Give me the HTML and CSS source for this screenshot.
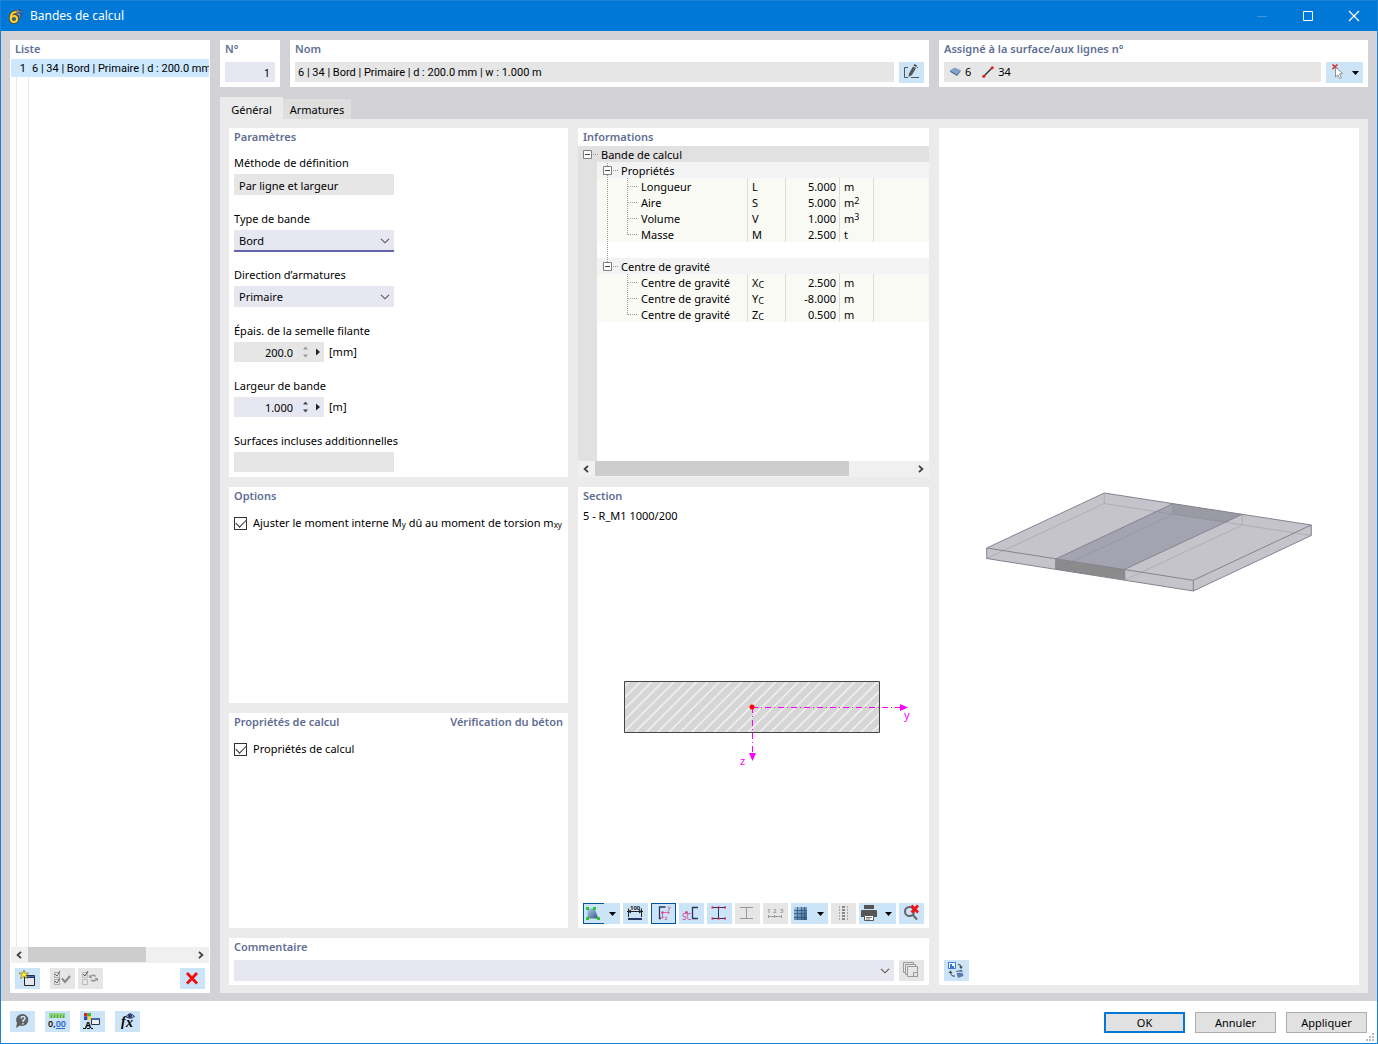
FILE: index.html
```html
<!DOCTYPE html>
<html lang="fr">
<head>
<meta charset="utf-8">
<title>Bandes de calcul</title>
<link rel="stylesheet" href="styles.css">
</head>
<body>
<svg class="defs" aria-hidden="true">
  <defs>
    <linearGradient id="blue" x1="0" y1="0" x2="1" y2="1"><stop offset="0" stop-color="#a9cdf0"/><stop offset="1" stop-color="#35567f"/></linearGradient>
    <pattern id="hatch" width="11.3" height="11.3" patternUnits="userSpaceOnUse"><path d="M-1 12.3L12.3 -1M-1 1L1 -1M10.3 12.3L12.3 10.3" stroke="#fff" stroke-width="1"/></pattern>
    <symbol id="chevron" viewBox="0 0 10 6"><path d="M1 .8L5 4.8L9 .8" fill="none" stroke="#555" stroke-width="1.1"/></symbol>
    <symbol id="left" viewBox="0 0 6 8"><path d="M5 .8L1.6 4L5 7.2" fill="none" stroke="#404040" stroke-width="1.8"/></symbol>
    <symbol id="right" viewBox="0 0 6 8"><path d="M1 .8L4.4 4L1 7.2" fill="none" stroke="#404040" stroke-width="1.8"/></symbol>
    <symbol id="down" viewBox="0 0 7 4"><path d="M0 0H7L3.5 4Z"/></symbol>
  </defs>
</svg>

<header class="titlebar">
  <svg width="16" height="16" viewBox="0 0 16 16" aria-hidden="true"><path d="M5 4Q8 -1 15 3L13 7L15 5L12 12L9 8Z" fill="#34557f"/><path d="M7 3L14 4M6 5L13 7M9 1L12 10" stroke="#8aa5c5" stroke-width=".7"/><path d="M8.500 4Q3 4 2.700 10Q2.700 14 6 14Q9 14 9 11Q9 8 6 8Q4 8 3 10" fill="none" stroke="#5d4b12" stroke-width="3.600"/><path d="M8.500 4Q3 4 2.700 10Q2.700 14 6 14Q9 14 9 11Q9 8 6 8Q4 8 3 10" fill="none" stroke="#ffd33c" stroke-width="2"/></svg>
  <h1>Bandes de calcul</h1>
  <div class="caption">
    <button type="button" aria-label="Réduire" disabled><svg width="12" height="12" viewBox="0 0 12 12"><path d="M1 6.500H11" stroke="#3c96e0"/></svg></button>
    <button type="button" aria-label="Agrandir"><svg width="12" height="12" viewBox="0 0 12 12"><path d="M1.500 1.500H10.500V10.500H1.500Z" fill="none" stroke="#fff"/></svg></button>
    <button type="button" aria-label="Fermer"><svg width="12" height="12" viewBox="0 0 12 12"><path d="M1 1L11 11M11 1L1 11" stroke="#fff" stroke-width="1.200"/></svg></button>
  </div>
</header>

<main class="workspace">
  <section class="panel list">
    <h2>Liste</h2>
    <ul class="entries">
      <li><span class="index">1</span><span class="entry">6 | 34 | Bord | Primaire | d : 200.0 mm | w : 1.000 m</span></li>
    </ul>
    <div class="scroll"><svg width="6" height="8"><use href="#left"/></svg><div class="track"><div class="thumb thumb-list"></div></div><svg width="6" height="8"><use href="#right"/></svg></div>
    <div class="list-tools">
      <button type="button" class="tool" aria-label="Nouveau"><svg width="25" height="21" viewBox="0 0 25 21"><path d="M9.500 8.500H19.500V17.500H9.500Z" fill="#e5e8f0" stroke="#252525"/><path d="M9.500 7.500H19.500V9.500H9.500Z" fill="#4971b5" stroke="#232f55"/><path d="M9 2L10 5.200L13.500 5L11 7L12.500 10.500L9 8.500L5.500 10.500L6.700 7L4 5L8 5Z" fill="#ffee34" stroke="#777528" stroke-width=".7"/></svg></button>
      <button type="button" class="tool off" aria-label="Tout sélectionner" disabled><svg width="25" height="21" viewBox="0 0 25 21" fill="none"><path d="M4.500 4.500H9.500V9.500H4.500ZM4.500 11.500H9.500V16.500H4.500Z" stroke="#aaa"/><path d="M5 6L7 8L10 3M5 13L7 15L10 10" stroke="#666"/><path d="M12 10.500L15 14L20 8" stroke="#888" stroke-width="2"/></svg></button>
      <button type="button" class="tool off" aria-label="Inverser la sélection" disabled><svg width="25" height="21" viewBox="0 0 25 21" fill="none"><path d="M4.500 4.500H9.500V9.500H4.500ZM4.500 11.500H9.500V16.500H4.500Z" stroke="#bbb"/><path d="M5 6L7 8L10 3" stroke="#555"/><path d="M12.500 8.500Q15 6 18 8.500M18.500 11.500Q16 14 13 12" stroke="#999" stroke-width="1.600"/><path d="M11 6.500V10H14.500ZM20 13.500V10H16.500Z" fill="#999"/></svg></button>
      <button type="button" class="tool last" aria-label="Supprimer"><svg width="25" height="21" viewBox="0 0 25 21"><path d="M7 5L17 15.500M17 5L7 15.500" stroke="#f20d0d" stroke-width="2.800"/></svg></button>
    </div>
  </section>

  <div class="detail">
    <div class="heading">
      <section class="panel">
        <h2><label for="number">N°</label></h2>
        <input id="number" class="field edit number" value="1">
      </section>
      <section class="panel">
        <h2><label for="name">Nom</label></h2>
        <div class="row">
          <input id="name" class="field compact" readonly value="6 | 34 | Bord | Primaire | d : 200.0 mm | w : 1.000 m">
          <button type="button" class="tool" aria-label="Modifier le nom"><svg width="25" height="21" viewBox="0 0 25 21"><path d="M9 5.500H5.500V15.500H9M12 15.500H20M18 5.500H19" fill="none" stroke="#555"/><path d="M9.500 15L10 11.500L14 4.500L17 6L13 13Z" fill="#555"/><path d="M14.500 3.500L15.500 2L18 3.500L17.300 5Z" fill="#444"/></svg></button>
        </div>
      </section>
      <section class="panel">
        <h2>Assigné à la surface/aux lignes n°</h2>
        <div class="row">
          <div class="field assigned">
            <svg width="12" height="12" viewBox="0 0 12 12" aria-hidden="true"><path d="M1 4.500L5.500 1.500L11.500 4L8 8.500Z" fill="#7fa4cc"/><path d="M1 4.500L8 8.500V10L1 5.700ZM8 8.500L11.500 4V5.500L8 10Z" fill="#46688f"/></svg><span class="surface">6</span>
            <svg width="12" height="12" viewBox="0 0 12 12" aria-hidden="true"><path d="M1.500 10.500L10.500 1.500" stroke="#222" stroke-width="1.200"/><circle cx="1.800" cy="10.200" r="1.500" fill="#e21818"/><circle cx="10.200" cy="1.800" r="1.500" fill="#e21818"/></svg><span>34</span>
          </div>
          <button type="button" class="tool wide" aria-label="Sélectionner"><svg width="25" height="21" viewBox="0 0 25 21"><path d="M6.500 2.500L11.500 7M11.500 2.500L6.500 7" stroke="#e81c1c" stroke-width="1.500"/><path d="M9.500 5L16.500 11.500L13.500 12L15.500 15.500L13.500 16.500L11.800 13L9.500 15Z" fill="#fff" stroke="#777" stroke-width=".8"/></svg><svg class="arrow" width="7" height="4"><use href="#down"/></svg></button>
        </div>
      </section>
    </div>

    <div class="tabs" role="tablist">
      <button type="button" role="tab" aria-selected="true" class="tab active">Général</button>
      <button type="button" role="tab" aria-selected="false" class="tab">Armatures</button>
    </div>

    <div class="content">
      <section class="panel params">
        <h2>Paramètres</h2>
        <div class="form">
          <div class="item"><label for="method">Méthode de définition</label><input id="method" class="field tall" readonly value="Par ligne et largeur"></div>
          <div class="item"><label for="type">Type de bande</label><div class="combo focused"><select id="type"><option>Bord</option></select><svg width="10" height="6"><use href="#chevron"/></svg></div></div>
          <div class="item"><label for="direction">Direction d’armatures</label><div class="combo"><select id="direction"><option>Primaire</option></select><svg width="10" height="6"><use href="#chevron"/></svg></div></div>
          <div class="item"><label for="thickness">Épais. de la semelle filante</label><div class="measure"><div class="spin"><input id="thickness" class="field" readonly value="200.0"><svg width="20" height="12" viewBox="0 0 20 12" aria-hidden="true"><path d="M0 3.500L2.500 .5L5 3.500ZM0 8.500L2.500 11.500L5 8.500Z" fill="#999"/><path d="M13 2.500L17 6L13 9.500Z" fill="#222"/></svg></div><span>[mm]</span></div></div>
          <div class="item"><label for="width">Largeur de bande</label><div class="measure"><div class="spin edit"><input id="width" class="field edit" value="1.000"><svg width="20" height="12" viewBox="0 0 20 12" aria-hidden="true"><path d="M0 3.500L2.500 .5L5 3.500ZM0 8.500L2.500 11.500L5 8.500Z" fill="#444"/><path d="M13 2.500L17 6L13 9.500Z" fill="#222"/></svg></div><span>[m]</span></div></div>
          <div class="item"><label for="extra">Surfaces incluses additionnelles</label><input id="extra" class="field" readonly value=""></div>
        </div>
      </section>

      <section class="panel info">
        <h2>Informations</h2>
        <div class="tree">
          <table>
            <colgroup><col class="c-gutter"><col class="c-name"><col class="c-symbol"><col class="c-value"><col class="c-unit"><col></colgroup>
            <tbody>
              <tr class="root"><th colspan="6">Bande de calcul</th></tr>
              <tr class="group"><td></td><th colspan="5">Propriétés</th></tr>
              <tr class="data"><td></td><th>Longueur</th><td>L</td><td>5.000</td><td>m</td><td></td></tr>
              <tr class="data"><td></td><th>Aire</th><td>S</td><td>5.000</td><td>m<sup>2</sup></td><td></td></tr>
              <tr class="data"><td></td><th>Volume</th><td>V</td><td>1.000</td><td>m<sup>3</sup></td><td></td></tr>
              <tr class="data"><td></td><th>Masse</th><td>M</td><td>2.500</td><td>t</td><td></td></tr>
              <tr><td colspan="6"></td></tr>
              <tr class="group"><td></td><th colspan="5">Centre de gravité</th></tr>
              <tr class="data"><td></td><th>Centre de gravité</th><td>X<sub>C</sub></td><td>2.500</td><td>m</td><td></td></tr>
              <tr class="data"><td></td><th>Centre de gravité</th><td>Y<sub>C</sub></td><td>-8.000</td><td>m</td><td></td></tr>
              <tr class="data"><td></td><th>Centre de gravité</th><td>Z<sub>C</sub></td><td>0.500</td><td>m</td><td></td></tr>
            </tbody>
          </table>
          <svg class="branches" width="64" height="176" viewBox="0 0 64 176" aria-hidden="true" fill="none">
            <path d="M15 8.500H20M35 24.500H40M35 120.500H40M29.500 17V120M49.500 32V89M49.500 128V169M50 40.500H60M50 56.500H60M50 72.500H60M50 88.500H60M50 136.500H60M50 152.500H60M50 168.500H60" stroke="#999" stroke-dasharray="1 1"/>
            <path d="M5.500 4.500H13.500V12.500H5.500ZM25.500 20.500H33.500V28.500H25.500ZM25.500 116.500H33.500V124.500H25.500Z" fill="#fff" stroke="#808080"/>
            <path d="M7 8.500H12M27 24.500H32M27 120.500H32" stroke="#444"/>
          </svg>
        </div>
        <div class="scroll"><svg width="6" height="8"><use href="#left"/></svg><div class="track"><div class="thumb thumb-info"></div></div><svg width="6" height="8"><use href="#right"/></svg></div>
      </section>

      <section class="panel options">
        <h2>Options</h2>
        <label class="check"><input type="checkbox" checked><span>Ajuster le moment interne M<sub>y</sub> dû au moment de torsion m<sub>xy</sub></span></label>
      </section>

      <section class="panel design">
        <div class="titles"><h2>Propriétés de calcul</h2><h2>Vérification du béton</h2></div>
        <label class="check"><input type="checkbox" checked><span>Propriétés de calcul</span></label>
      </section>

      <section class="panel section">
        <h2>Section</h2>
        <p>5 - R_M1 1000/200</p>
        <div class="canvas">
          <svg width="341" height="120" viewBox="583 654 341 120" role="img" aria-label="Section rectangulaire">
            <path d="M624.500 681.500H879.500V732.500H624.500Z" fill="#d6d6d6"/><path d="M624.500 681.500H879.500V732.500H624.500Z" fill="url(#hatch)" stroke="#444"/>
            <path d="M752 707.500H900M752.500 707V754" stroke="#f0f" stroke-dasharray="6 3 1 3"/>
            <path d="M900 704V711L908 707.500ZM749 753H756L752.500 761Z" fill="#f0f"/><circle cx="752" cy="707" r="2.500" fill="#f00"/>
            <text x="904" y="719" class="axis">y</text><text x="740" y="765" class="axis">z</text>
          </svg>
        </div>
        <div class="toolbar">
          <button type="button" class="tool wide split" aria-label="Affichage"><svg width="25" height="21" viewBox="0 0 25 21"><path d="M4.500 5.500H11.500L15.500 15.500H4.500Z" fill="url(#blue)"/><path d="M3 4H6V7H3ZM10 4H13V7H10ZM3 14H6V17H3ZM14 14H17V17H14Z" fill="#2ccb2c"/></svg><svg class="arrow" width="7" height="4"><use href="#down"/></svg></button>
          <button type="button" class="tool" aria-label="Dimensions"><svg width="25" height="21" viewBox="0 0 25 21"><path d="M5.500 5.500V14M18.500 5.500V14M4 8.500H20" stroke="#222"/><path d="M5 8.500L8 6.500V10.500ZM19 8.500L16 6.500V10.500Z" fill="#222"/><path d="M5 15H19V17H5Z" fill="#2a3566"/><text x="7" y="6.500" class="tiny" fill="#222">100</text></svg></button>
          <button type="button" class="tool pressed" aria-label="Axes principaux"><svg width="25" height="21" viewBox="0 0 25 21" fill="none"><path d="M14.500 4H8.500V15.500H10" stroke="#2a3566" stroke-width="1.300"/><path d="M11.500 9.500H18M11.500 9.500V15" stroke="#d3478f" stroke-width=".8"/><path d="M16.500 8L18.500 9.500L16.500 11M10 13.500L11.500 15.500L13 13.500M17 3.500L18.200 6M19.500 3.500L17.500 8M14 14.500H16L14 16.500H16" stroke="#d3478f" stroke-width=".7"/><circle cx="11.500" cy="9.500" r="1.300" fill="#d3478f"/></svg></button>
          <button type="button" class="tool" aria-label="Centre de cisaillement"><svg width="25" height="21" viewBox="0 0 25 21"><path d="M19 4.500H13.500V15.500H19" fill="none" stroke="#2a3566" stroke-width="1.300"/><circle cx="7.500" cy="9.500" r="1.500" fill="#d3478f"/><text x="3" y="17" class="small" fill="#d3478f">SC</text></svg></button>
          <button type="button" class="tool" aria-label="Contour"><svg width="25" height="21" viewBox="0 0 25 21"><path d="M5 4.500H18M5 15.500H18M11.500 4V16" stroke="#2a3566"/><path d="M4.500 3.500H6.500V5.500H4.500ZM10.500 3.500H12.500V5.500H10.500ZM17 3.500H19V5.500H17ZM4.500 14.500H6.500V16.500H4.500ZM10.500 14.500H12.500V16.500H10.500ZM17 14.500H19V16.500H17Z" fill="#e02040"/></svg></button>
          <button type="button" class="tool off" aria-label="Parties" disabled><svg width="25" height="21" viewBox="0 0 25 21"><path d="M5 4.500H10M13 4.500H18M5 15.500H10M13 15.500H18M11.500 5V15M9 4.500H14M9 15.500H14" stroke="#999"/></svg></button>
          <button type="button" class="tool off" aria-label="Numérotation" disabled><svg width="25" height="21" viewBox="0 0 25 21"><path d="M5 13.500H19M5.500 12V15M11.500 12V15M18.500 12V15" stroke="#999"/><text x="4" y="10" class="tiny" fill="#999">1</text><text x="10" y="10" class="tiny" fill="#999">2</text><text x="17" y="10" class="tiny" fill="#999">3</text></svg></button>
          <button type="button" class="tool wide" aria-label="Grille"><svg width="25" height="21" viewBox="0 0 25 21"><path d="M3 4H16V17H3Z" fill="url(#blue)"/><path d="M6.500 4V17M10.500 4V17M13.500 4V17M3 7.500H16M3 10.500H16M3 14.500H16" stroke="#31577f" stroke-width=".8"/></svg><svg class="arrow" width="7" height="4"><use href="#down"/></svg></button>
          <button type="button" class="tool off" aria-label="Points" disabled><svg width="25" height="21" viewBox="0 0 25 21"><path d="M12.500 3V18" stroke="#888" stroke-width="3" stroke-dasharray="2 1"/><path d="M8.500 3V18M16.500 3V18" stroke="#aaa" stroke-dasharray="2 1"/></svg></button>
          <button type="button" class="tool wide" aria-label="Imprimer"><svg width="25" height="21" viewBox="0 0 25 21"><path d="M5 2H15V6H5ZM2 8Q2 7 3 7H17Q18 7 18 8V14H15V12H5V14H2Z" fill="#555"/><path d="M5.500 12.500H14.500V17.500H5.500Z" fill="#fff" stroke="#555"/><path d="M7 14.500H13M7 16H11" stroke="#555" stroke-width=".8"/></svg><svg class="arrow" width="7" height="4"><use href="#down"/></svg></button>
          <button type="button" class="tool" aria-label="Réinitialiser le zoom"><svg width="25" height="21" viewBox="0 0 25 21"><circle cx="10.500" cy="8.500" r="4.500" fill="none" stroke="#666" stroke-width="2"/><path d="M13.500 11.500L18 16.500" stroke="#666" stroke-width="2"/><path d="M12.500 2.500L19 9.500M19 2.500L12.500 9.500" stroke="#f31010" stroke-width="2.600"/></svg></button>
        </div>
      </section>

      <section class="panel comment">
        <h2><label for="comment">Commentaire</label></h2>
        <div class="row">
          <div class="combo"><select id="comment"><option></option></select><svg width="10" height="6"><use href="#chevron"/></svg></div>
          <button type="button" class="tool off" aria-label="Modèles de commentaires" disabled><svg width="25" height="21" viewBox="0 0 25 21" fill="#e6e6e6" stroke="#999"><path d="M4.500 2.500H14.500V12.500H4.500Z"/><path d="M6.500 4.500H16.500V14.500H6.500Z"/><path d="M8.500 6.500H18.500V16.500H8.500ZM14.500 12.500H18.500V16.500H14.500Z"/></svg></button>
        </div>
      </section>

      <section class="panel preview">
        <div class="canvas">
          <svg width="340" height="128" viewBox="979 480 340 128" role="img" aria-label="Bande de calcul sur la dalle" stroke-linejoin="round">
            <path d="M986.700 548L1104.300 493L1311.300 525V535.500L1193.300 591L986.700 558.500Z" fill="#c5c4cb"/>
            <path d="M1055.700 559L1173 503.700L1242.300 514.300L1124.700 569.300Z" fill="#a3a4af"/>
            <path d="M1173 503.700L1242.300 514.300L1225 522.500L1173 514.300Z" fill="#9a9aa4"/>
            <path d="M1055.700 559L1124.700 569.300V580L1055.700 569.500Z" fill="#8b8b8b"/>
            <path d="M986.700 558.500L1104.300 503.500L1311.300 535.500M1104.300 493V503.500M1173 503.700V514.300L1055.700 569.500M1242.300 514.300V525L1124.700 580" fill="none" stroke="#7d7c8b" stroke-opacity=".3"/>
            <path d="M986.700 548L1104.300 493L1311.300 525L1193.300 580.300ZM986.700 548V558.500L1193.300 591L1311.300 535.500V525M1193.300 580.300V591M1055.700 569.500V559L1173 503.700M1124.700 580V569.300L1242.300 514.300" fill="none" stroke="#858392"/>
          </svg>
        </div>
        <button type="button" class="tool" aria-label="Changer de vue"><svg width="25" height="21" viewBox="0 0 25 21"><path d="M4.500 2.500H11.500V8.500H4.500Z" fill="#fff" stroke="#3975dd"/><path d="M6 4H8V6H10V8H6Z" fill="#3975dd"/><path d="M12 11L18 9.500L19.500 16L14 18Z" fill="#5c7cab"/><path d="M12 13L15 12L19 13" stroke="#dce6f2" fill="none"/><path d="M14 4.500Q17 4 17 7M11 16Q7 17 6.500 12" fill="none" stroke="#444"/><path d="M15 6.500H19L17 9ZM4.500 13H8.500L6.500 10.500Z" fill="#444"/></svg></button>
      </section>
    </div>
  </div>
</main>

<footer class="footer">
  <button type="button" class="tool" aria-label="Aide"><svg width="25" height="21" viewBox="0 0 25 21"><path d="M13 3A6 6 0 1 1 10 14.500L6 17L7 12A6 6 0 0 1 13 3Z" fill="#606060"/><path d="M11 7.500Q11 5.500 13 5.500Q15 5.500 15 7.500Q15 8.500 13 9.500V11M13 12V13.500" fill="none" stroke="#cce4f7" stroke-width="1.500"/></svg></button>
  <button type="button" class="tool" aria-label="Unités et décimales"><svg width="25" height="21" viewBox="0 0 25 21"><path d="M4 2H20V7H4Z" fill="#8cd47c"/><path d="M6.500 4V7M9.500 4V7M12.500 4V7M15.500 4V7M18.500 4V7" stroke="#54a14c"/><text x="3" y="16" class="units" fill="#111">0,<tspan fill="#2e65cf">00</tspan></text><path d="M11 17.500H20" stroke="#2e65cf"/></svg></button>
  <button type="button" class="tool" aria-label="Affichage"><svg width="25" height="21" viewBox="0 0 25 21"><path d="M4 2H7.500V5.500H4Z" fill="#e02222"/><path d="M7.500 2H11V5.500H7.500Z" fill="#39b939"/><path d="M4 5.500H7.500V9H4Z" fill="#2744ce"/><path d="M7.500 5.500H11V9H7.500Z" fill="#f2df27"/><text x="5" y="16.500" class="letter">A</text><path d="M3 17.500H13" stroke="#111" stroke-dasharray="3 1"/><path d="M11.500 7.500H19.500V13.500H11.500Z" fill="#eee" stroke="#334"/><path d="M11.500 8H19.500" stroke="#4669b5" stroke-width="2"/></svg></button>
  <button type="button" class="tool" aria-label="Formules"><svg width="25" height="21" viewBox="0 0 25 21"><text x="6" y="15" class="formula">f</text><text x="11" y="16" class="formula">x</text><path d="M11 5.500Q15 0 19.500 5.500Q15 9 11 5.500Z" fill="#a9b4d6" stroke="#2a3566"/><circle cx="15" cy="5" r="2" fill="#2a3566"/></svg></button>
  <div class="actions">
    <button type="button" class="push default">OK</button>
    <button type="button" class="push">Annuler</button>
    <button type="button" class="push">Appliquer</button>
  </div>
  <svg class="grip" width="8" height="8" viewBox="0 0 8 8" aria-hidden="true"><path d="M6 0H8V2H6ZM3 3H5V5H3ZM6 3H8V5H6ZM0 6H2V8H0ZM3 6H5V8H3ZM6 6H8V8H6Z" fill="#bcbcbc"/></svg>
</footer>
</body>
</html>
```
FILE: styles.css
```css
* { box-sizing: border-box; }

body {
  margin: 0;
  min-height: 100vh;
  display: flex;
  flex-direction: column;
  border: 1px solid #1883d7;
  background: #fff;
  color: #000;
  font: 11px/18px "Noto Sans", "Open Sans", sans-serif;
}

button, input, select { font: inherit; color: inherit; margin: 0; border: 0; border-radius: 0; }
h1, h2, p, ul { margin: 0; padding: 0; }
svg { display: block; flex: none; }
.defs { position: absolute; width: 0; height: 0; }

/* Title bar */
.titlebar { display: flex; align-items: center; height: 30px; padding-left: 7px; gap: 6px; background: #0078d7; color: #fff; }
.titlebar h1 { font-size: 12px; font-weight: 400; }
.caption { display: flex; margin-left: auto; }
.caption button { width: 46px; height: 28px; padding: 0 17px; background: none; }

/* Work area */
.workspace { flex: 1; display: flex; gap: 10px; padding: 9px 9px 8px; background: #d2d1d6; }
.panel { background: #fff; padding: 0 5px 4px; min-width: 0; display: flex; flex-direction: column; }
.panel h2 { font-size: 11px; line-height: 18px; font-weight: 600; color: #5f6e94; white-space: nowrap; }
.row { display: flex; gap: 5px; margin-top: 4px; }

.field { display: block; height: 20px; width: 100%; min-width: 0; padding: 1px 3px 0; background: #e6e6e6; outline: 0; }
.edit { background: #e7e7f2; }
.item .tall { height: 21px; padding-top: 0; }
.number { margin-top: 4px; padding-right: 5px; text-align: right; }
.compact { font-family: Roboto, "Noto Sans", sans-serif; }

.tool { display: flex; flex: none; align-items: center; width: 25px; height: 21px; padding: 0; background: #cce4f7; overflow: hidden; }
.tool.off { background: #e6e6e6; }
.tool.wide { width: 37px; }
.tool .arrow { margin-left: 1px; }
.tool.pressed { box-shadow: inset 0 0 0 1px #005499; }
.tool.split { background: linear-gradient(#005499, #005499) 0 0 / 21px 1px no-repeat, linear-gradient(#005499, #005499) 0 100% / 21px 1px no-repeat, linear-gradient(#005499, #005499) 0 0 / 1px 100% no-repeat, #cce4f7; }

/* List */
.list { flex: none; width: 200px; padding: 0 1px 4px; }
.list h2 { padding: 0 4px; }
.entries { flex: 1; margin-top: 1px; list-style: none; background: linear-gradient(#e8e8e8, #e8e8e8) 5px 0 / 1px 100% no-repeat, linear-gradient(#e8e8e8, #e8e8e8) 17px 0 / 1px 100% no-repeat; }
.entries li { display: flex; height: 18px; background: linear-gradient(#dfe4ea, #dfe4ea) 5px 0 / 1px 100% no-repeat, linear-gradient(#dfe4ea, #dfe4ea) 17px 0 / 1px 100% no-repeat, #cce8ff; line-height: 20px; font-family: Roboto, "Noto Sans", sans-serif; }
.index { flex: none; width: 15px; text-align: right; }
.entry { padding-left: 6px; white-space: nowrap; overflow: hidden; }
.list-tools { display: flex; gap: 3px; margin-top: 5px; padding: 0 4px; }
.list-tools .tool:first-child { margin-right: 7px; }
.list-tools .last { margin-left: auto; }

.scroll { display: flex; align-items: center; justify-content: space-between; height: 16px; padding: 0 5px 1px; gap: 6px; background: #f0f0f0; }
.track { flex: 1; height: 15px; }
.thumb { height: 100%; background: #cdcdcd; }
.thumb-list { width: 72%; }
.thumb-info { width: 80%; }

/* Detail */
.detail { flex: 1; min-width: 0; display: flex; flex-direction: column; }
.heading { display: grid; grid-template-columns: 60px minmax(0, 639fr) minmax(0, 429fr); gap: 10px; }
.assigned { display: flex; align-items: center; padding: 0 5px; gap: 4px; line-height: 20px; }
.surface { margin-right: 7px; }

.tabs { display: flex; align-items: flex-end; height: 22px; margin-top: 10px; }
.tab { width: 68px; height: 20px; padding: 2px 0 0; background: #dedede; }
.tab.active { width: 63px; height: 22px; padding-top: 4px; background: #ebebeb; }

.content {
  flex: 1;
  display: grid;
  gap: 10px;
  padding: 9px 9px 8px;
  background: #ebebeb;
  grid-template-columns: minmax(0, 339fr) minmax(0, 351fr) minmax(0, 420fr);
  grid-template-rows: auto 216fr 215fr auto;
  grid-template-areas: "params info preview" "options section preview" "design section preview" "comment comment preview";
}
.params { grid-area: params; padding-bottom: 5px; }
.info { grid-area: info; padding: 0; }
.info h2 { padding: 0 5px; }
.options { grid-area: options; }
.design { grid-area: design; }
.section { grid-area: section; }
.comment { grid-area: comment; }
.preview { grid-area: preview; }

.form { display: flex; flex-direction: column; gap: 15px; margin-top: 8px; }
.item { display: flex; flex-direction: column; gap: 2px; }
.item > .field, .item > .combo { width: 160px; }
.item .field { padding: 1px 5px 0; }

.combo { display: grid; flex: 1; align-items: center; height: 21px; background: #e7e7f2; }
.item > .combo { flex: none; }
.combo select { grid-area: 1 / 1; width: 100%; height: 21px; padding: 1px 5px 0; background: none; appearance: none; outline: 0; }
.combo svg { grid-area: 1 / 1; justify-self: end; margin-right: 4px; pointer-events: none; }
.focused { box-shadow: inset 0 -1px #6264a7, 0 1px #6264a7; }

.measure { display: flex; align-items: center; gap: 5px; }
.spin { display: flex; align-items: center; width: 90px; height: 20px; background: #e6e6e6; }
.spin.edit { background: #e7e7f2; }
.spin .field { width: 69px; padding: 1px 10px 0 0; text-align: right; }

.check { display: flex; align-items: center; gap: 6px; margin-top: 9px; line-height: 18px; white-space: nowrap; }
.check input {
  appearance: none;
  flex: none;
  width: 13px;
  height: 13px;
  border: 1px solid #333;
  display: grid;
  place-items: center;
}
.check input:checked::before { content: ""; width: 9px; height: 5px; border: solid #333; border-width: 0 0 1px 1px; transform: translateY(-1px) rotate(-45deg); }
.check sub { font-size: 8px; vertical-align: -1px; }
.titles { display: flex; justify-content: space-between; }
sub, sup { font-size: 9px; line-height: 0; }
sub { vertical-align: -1px; }
sup { vertical-align: 3px; }

/* Property tree */
.tree { flex: 1; position: relative; background: linear-gradient(#e1e1e1, #e1e1e1) 0 0 / 19px 100% no-repeat; }
.tree table { width: 100%; table-layout: fixed; border-collapse: collapse; line-height: 14px; }
.tree tr { height: 16px; }
.tree th, .tree td { height: 16px; padding: 2px 0 0; font-weight: 400; text-align: left; white-space: nowrap; }
.c-gutter { width: 19px; }
.c-name { width: 151px; }
.c-symbol { width: 38px; }
.c-value { width: 54px; }
.c-unit { width: 34px; }
.tree .root th { padding-left: 23px; background: #e1e1e1; }
.tree .group th { padding-left: 24px; background: #f3f3f3; }
.tree .data th { padding-left: 44px; }
.tree .data td { padding-left: 4px; }
.tree .data td:nth-child(4) { padding: 2px 4px 0 0; text-align: right; }
.tree .data > :nth-child(n+2) { background: #fafaf5; }
.tree .data > :nth-child(n+2):nth-child(-n+5) { background: linear-gradient(#dcdcdc, #dcdcdc) 100% 0 / 1px 100% no-repeat #fafaf5; }
.branches { position: absolute; left: 0; top: 0; pointer-events: none; }

/* Drawings */
.section p { margin-top: 2px; }
.canvas { flex: 1; display: flex; align-items: center; justify-content: center; overflow: hidden; }
.toolbar { display: flex; gap: 3px; }
.axis { font-size: 11px; fill: #f0f; }
.tiny { font-size: 6px; font-weight: 700; }
.small { font-size: 8px; }
.units { font-size: 9px; font-weight: 600; }
.letter { font-size: 9px; font-weight: 700; }
.formula { font: italic 700 14px "Liberation Serif", serif; }

/* Footer */
.footer { position: relative; display: flex; align-items: flex-start; gap: 10px; height: 42px; padding: 10px 10px 0 9px; }
.actions { display: flex; gap: 10px; margin: 1px 0 0 auto; }
.push { width: 81px; height: 21px; padding: 1px 0 0; border: 1px solid #adadad; background: #e1e1e1; }
.push.default { padding: 0; border: 2px solid #0078d7; }
.grip { position: absolute; right: 3px; bottom: 2px; }
```
